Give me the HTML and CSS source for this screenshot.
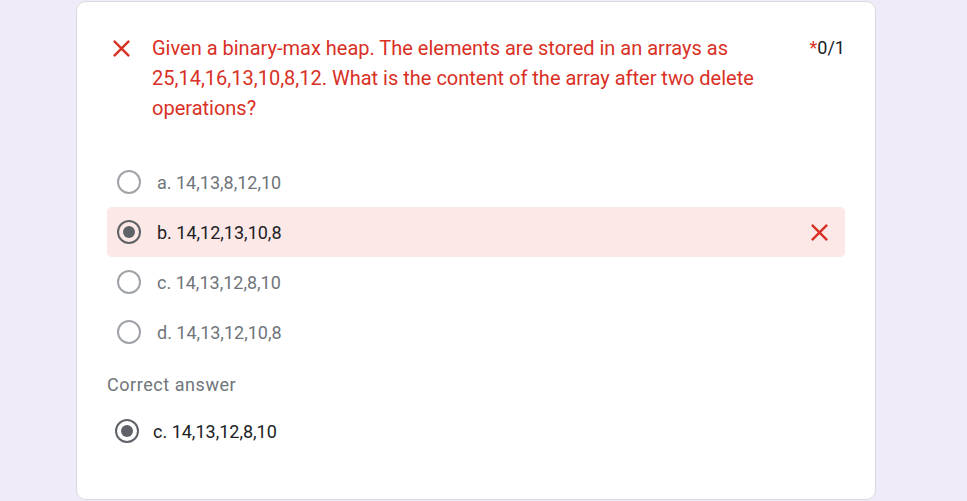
FILE: index.html
```html
<!DOCTYPE html>
<html>
<head>
<meta charset="utf-8">
<link rel="stylesheet" href="styles.css">
</head>
<body>
<div class="card">
  <div class="question">
    <svg class="x-icon" viewBox="0 0 24 24"><path d="M19 6.41L17.59 5 12 10.590 6.41 5 5 6.41 10.59 12 5 17.59 6.41 19 12 13.41 17.59 19 19 17.59 13.41 12z"/></svg>
    <div class="q-text">Given a binary-max heap. The elements are stored in an arrays as 25,14,16,13,10,8,12. What is the content of the array after two delete operations?</div>
    <div class="score"><span class="star">*</span>0/1</div>
  </div>
  <div class="options">
    <div class="option"><span class="radio"></span><span class="opt-text">a. 14,13,8,12,10</span></div>
    <div class="option wrong"><span class="radio checked"></span><span class="opt-text">b. 14,12,13,10,8</span>
      <svg class="x-icon row-x" viewBox="0 0 24 24"><path d="M19 6.41L17.59 5 12 10.59 6.41 5 5 6.41 10.59 12 5 17.59 6.41 19 12 13.41 17.59 19 19 17.59 13.41 12z"/></svg>
    </div>
    <div class="option"><span class="radio"></span><span class="opt-text">c. 14,13,12,8,10</span></div>
    <div class="option"><span class="radio"></span><span class="opt-text">d. 14,13,12,10,8</span></div>
  </div>
  <div class="correct-label">Correct answer</div>
  <div class="correct-row"><span class="radio checked"></span><span class="opt-text">c. 14,13,12,8,10</span></div>
</div>
</body>
</html>
```
FILE: styles.css
```css
html, body {
  margin: 0;
  padding: 0;
  background: #f0ebf8;
  font-family: Roboto, "Liberation Sans", Arial, sans-serif;
}
.card {
  box-sizing: border-box;
  margin: 1px 0 0 76px;
  width: 800px;
  height: 499px;
  background: #fff;
  border: 1px solid #dadce0;
  border-radius: 10px;
  padding: 31px 30px 0 30px;
}
.question {
  display: flex;
  align-items: flex-start;
}
.x-icon {
  width: 29px;
  height: 29px;
  fill: #d93025;
  flex: none;
}
.question .x-icon {
  margin: 1px 16px 0 0;
}
.q-text {
  flex: 1;
  color: #d93025;
  font-size: 20px;
  line-height: 30px;
}
.score {
  flex: none;
  margin-left: 20px;
  font-size: 18px;
  line-height: 30px;
  color: #202124;
}
.star { color: #d93025; }
.options {
  margin-top: 34px;
  display: flex;
  flex-direction: column;
}
.option {
  display: flex;
  align-items: center;
  height: 50px;
  padding-left: 10px;
  border-radius: 5px;
}
.option.wrong {
  background: #fce8e6;
}
.radio {
  box-sizing: border-box;
  width: 24px;
  height: 24px;
  border: 2.5px solid #a0a3a7;
  border-radius: 50%;
  flex: none;
  display: flex;
  align-items: center;
  justify-content: center;
}
.radio.checked {
  border-color: #5f6368;
}
.radio.checked::after {
  content: "";
  width: 12px;
  height: 12px;
  border-radius: 50%;
  background: #5f6368;
}
.opt-text {
  margin-left: 16px;
  font-size: 18px;
  color: #70757a;
}
.option.wrong .opt-text { color: #202124; }
.row-x {
  margin-left: auto;
  margin-right: 11px;
}
.correct-label {
  margin-top: 16px;
  font-size: 18px;
  letter-spacing: 0.55px;
  line-height: 24px;
  color: #70757a;
}
.correct-row {
  display: flex;
  align-items: center;
  height: 48px;
  margin-top: 10px;
  padding-left: 8px;
}
.correct-row .opt-text {
  margin-left: 14px;
  color: #202124;
}
```
